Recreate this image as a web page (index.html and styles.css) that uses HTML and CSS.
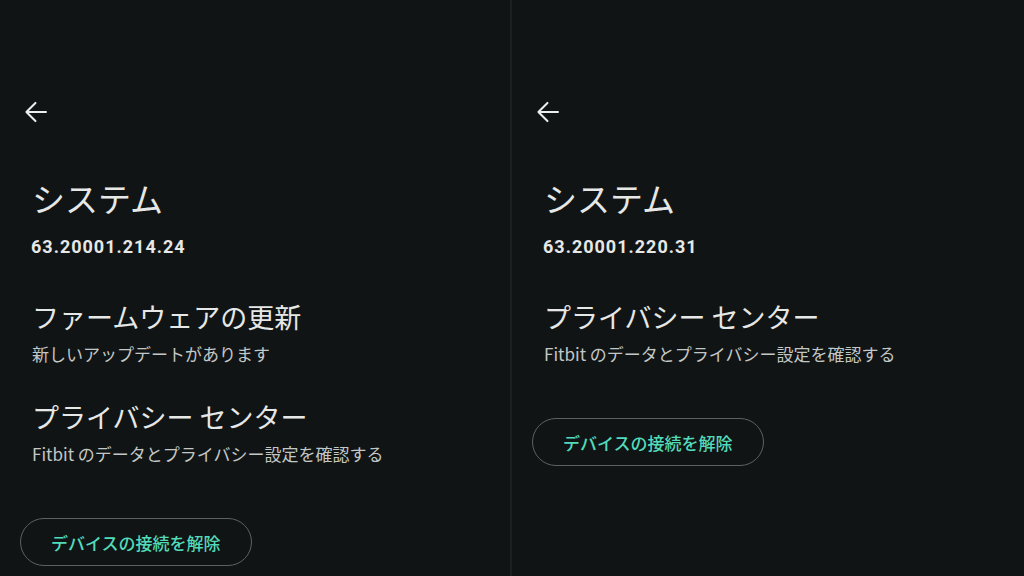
FILE: index.html
```html
<!DOCTYPE html>
<html lang="ja">
<head>
    <meta charset="UTF-8">
    <meta name="viewport" content="width=device-width, initial-scale=1.0">
    <title>システム</title>
    <link rel="stylesheet" href="styles.css">
</head>
<body>
    <main class="screens">
        <section class="panel">
            <button class="back" aria-label="戻る">
                <svg viewBox="0 0 24 24" width="32" height="32"><path d="M19.5 12H4.8M11.6 5.2L4.8 12l6.8 6.8" fill="none" stroke="currentColor" stroke-width="1.5" stroke-linecap="round" stroke-linejoin="round"/></svg>
            </button>
            <h1 class="title">システム</h1>
            <div class="version">63.20001.214.24</div>
            <div class="items">
                <div class="item">
                    <h2>ファームウェアの更新</h2>
                    <p>新しいアップデートがあります</p>
                </div>
                <div class="item">
                    <h2>プライバシー センター</h2>
                    <p>Fitbit のデータとプライバシー設定を確認する</p>
                </div>
            </div>
            <button class="unpair">デバイスの接続を解除</button>
        </section>

        <section class="panel">
            <button class="back" aria-label="戻る">
                <svg viewBox="0 0 24 24" width="32" height="32"><path d="M19.5 12H4.8M11.6 5.2L4.8 12l6.8 6.8" fill="none" stroke="currentColor" stroke-width="1.5" stroke-linecap="round" stroke-linejoin="round"/></svg>
            </button>
            <h1 class="title">システム</h1>
            <div class="version">63.20001.220.31</div>
            <div class="items">
                <div class="item">
                    <h2>プライバシー センター</h2>
                    <p>Fitbit のデータとプライバシー設定を確認する</p>
                </div>
            </div>
            <button class="unpair">デバイスの接続を解除</button>
        </section>
    </main>
</body>
</html>
```

FILE: styles.css
```css
body {
    margin: 0;
    background-color: #1d2020;
    font-family: "Noto Sans CJK JP", "Noto Sans", sans-serif;
    color: #e6e8e7;
}
.screens {
    display: grid;
    grid-template-columns: 510px 512px;
    column-gap: 2px;
    height: 576px;
    overflow: hidden;
}
.panel {
    background-color: #111414;
    padding: 96px 0 0 32px;
    display: flex;
    flex-direction: column;
    align-items: flex-start;
}
.back {
    width: 32px;
    height: 32px;
    margin-left: -12px;
    padding: 0;
    border: none;
    background: none;
    color: #eceeed;
    display: flex;
}
.title {
    margin: 50px 0 0;
    font-size: 33px;
    line-height: 40px;
    font-weight: 400;
}
.version {
    margin: 17px 0 0 -1px;
    font-family: Roboto, "Noto Sans", sans-serif;
    font-size: 18px;
    line-height: 24px;
    font-weight: 700;
    letter-spacing: 1px;
}
.items {
    margin-top: 41px;
    display: flex;
    flex-direction: column;
    gap: 34px;
}
.item h2 {
    margin: 0;
    font-size: 27px;
    line-height: 34px;
    font-weight: 400;
}
.item p {
    margin: 8px 0 0;
    font-size: 17px;
    line-height: 24px;
    color: #c3c7c6;
}
.unpair {
    margin: 52px 0 0 -12px;
    height: 48px;
    padding: 0 30px;
    border: 1px solid #5c6161;
    border-radius: 24px;
    background: none;
    color: #52dbba;
    font-family: "Noto Sans CJK JP", sans-serif;
    font-size: 17px;
    font-weight: 500;
}
```
